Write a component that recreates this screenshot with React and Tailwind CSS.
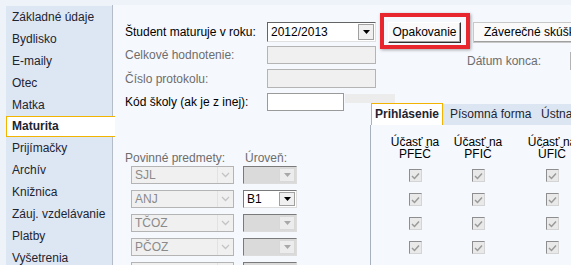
import React from 'react'

const menu = [
  'Základné údaje',
  'Bydlisko',
  'E-maily',
  'Otec',
  'Matka',
  'Maturita',
  'Prijímačky',
  'Archív',
  'Knižnica',
  'Záuj. vzdelávanie',
  'Platby',
  'Vyšetrenia',
]

const subjects = ['SJL', 'ANJ', 'TČOZ', 'PČOZ', '']

function Triangle({ color = '#000' }) {
  return (
    <svg width="7" height="4" viewBox="0 0 7 4">
      <path d="M0 0h7L3.5 4z" fill={color} />
    </svg>
  )
}

function Chevron() {
  return (
    <svg width="9" height="6" viewBox="0 0 9 6">
      <path d="M1 1l3.5 3.5L8 1" fill="none" stroke="#c4c4c4" strokeWidth="1.3" />
    </svg>
  )
}

function CheckBox() {
  return (
    <div className="w-[13px] h-[13px] border border-t-[#8e8e8e] border-l-[#8e8e8e] border-r-[#d4d4d4] border-b-[#d4d4d4] bg-[#e9e9e9] flex items-center justify-center">
      <svg width="9" height="8" viewBox="0 0 9 8">
        <path d="M1 4l2.5 2.5L8 1.5" fill="none" stroke="#9a9a9a" strokeWidth="1.5" />
      </svg>
    </div>
  )
}

function LevelCombo({ value }) {
  const enabled = !!value
  return (
    <div
      className={`ml-[9px] w-[54px] h-[18px] flex border border-t-[#7a7a7a] border-l-[#7a7a7a] border-r-[#dcdcdc] border-b-[#dcdcdc] ${
        enabled ? 'bg-white' : 'bg-[#dadada]'
      }`}
    >
      <div className="flex-1 pl-[3px] text-[12px] leading-[16px] text-black">{value}</div>
      <div
        className={`w-[16px] m-[1px] flex items-center justify-center border ${
          enabled ? 'bg-[#f0f0f0] border-[#a0a0a0]' : 'bg-[#ececec] border-[#d8d8d8]'
        }`}
      >
        <Triangle color={enabled ? '#000' : '#a8a8a8'} />
      </div>
    </div>
  )
}

function Field({ label, gray, children, mt }) {
  return (
    <div className={`flex items-center ${mt}`}>
      <div className={`w-[142px] shrink-0 text-[12px] ${gray ? 'text-[#6d6d6d]' : 'text-black'}`}>{label}</div>
      {children}
    </div>
  )
}

export default function App() {
  return (
    <div className="w-[571px] h-[265px] overflow-hidden bg-[#eef3fa] pt-[5px] pl-[6px] flex font-['Liberation_Sans',Arial,sans-serif] select-none">
      {/* Sidebar */}
      <aside className="w-[106px] shrink-0 mt-[1px] bg-[#dde7f4] flex flex-col">
        {menu.map(name =>
          name === 'Maturita' ? (
            <div key={name} className="h-[22px] relative z-10 -mr-[3px]">
              <div className="h-[21px] bg-white border border-r-0 border-[#f2b400] pl-[5px] text-[12px] leading-[19px] font-bold text-[#1e2430]">
                {name}
              </div>
            </div>
          ) : (
            <div key={name} className="h-[22px] pl-[6px] text-[12px] leading-[22px] text-[#1e2430]">
              {name}
            </div>
          )
        )}
      </aside>

      {/* Main panel */}
      <main className="flex-1 border-l border-[#b4bcc8] bg-[#f5f8fd] flex">
        {/* Left column */}
        <div className="w-[257px] shrink-0 pl-[12px] flex flex-col">
          <Field label="Študent maturuje v roku:" mt="mt-[17px]">
            <div className="w-[109px] h-[20px] shrink-0 bg-white border border-t-[#646464] border-l-[#646464] border-r-[#e0e0e0] border-b-[#e0e0e0] flex">
              <div className="flex-1 pl-[3px] text-[12px] leading-[18px] text-black">2012/2013</div>
              <div className="w-[16px] m-[1px] bg-[#f0f0f0] border border-[#a0a0a0] flex items-center justify-center">
                <Triangle />
              </div>
            </div>
          </Field>
          <Field label="Celkové hodnotenie:" gray mt="mt-[4px]">
            <div className="w-[109px] h-[18px] shrink-0 bg-[#f0f0f0] border border-[#b4b4b4]" />
          </Field>
          <Field label="Číslo protokolu:" gray mt="mt-[5px]">
            <div className="w-[109px] h-[19px] shrink-0 bg-[#f0f0f0] border border-[#b4b4b4]" />
          </Field>
          <div className="flex items-start mt-[5px] h-[18px]">
            <div className="w-[142px] shrink-0 text-[12px] leading-[18px] text-black">Kód školy (ak je z inej):</div>
            <div className="w-[77px] h-[18px] shrink-0 bg-white border border-[#9a9a9a]" />
            <div className="w-[50px] h-[9px] shrink-0 mt-[1px] ml-[1px] bg-[#ececec]" />
          </div>

          <div className="mt-[40px] h-[14px] flex text-[12px] leading-[14px] text-[#6d6d6d]">
            <div className="w-[120px]">Povinné predmety:</div>
            <div>Úroveň:</div>
          </div>
          <div className="mt-[1px] flex flex-col gap-[6px]">
            {subjects.map((s, i) => (
              <div key={i} className="flex h-[18px] ml-[6px]">
                <div className="w-[103px] h-[18px] bg-[#f0f0f0] border border-[#b4b4b4] flex">
                  <div className="flex-1 pl-[3px] text-[12px] leading-[16px] text-[#8a8a8a]">{s}</div>
                  <div className="w-[16px] flex items-center justify-center border-l border-[#e2e2e2]">
                    <Chevron />
                  </div>
                </div>
                <LevelCombo value={s === 'ANJ' ? 'B1' : ''} />
              </div>
            ))}
          </div>
        </div>

        {/* Right column */}
        <div className="flex-1 flex flex-col min-w-0">
          <div className="h-[98px] shrink-0 flex flex-col">
            <div className="flex items-start mt-[8px]">
              <div className="ml-[10px] w-[90px] h-[36px] shrink-0 border-4 border-[#e8262d] shadow-[1px_1px_3px_rgba(0,0,0,0.35)] pt-[5px] pl-[4px]">
                <div className="w-[73px] h-[21px] bg-[#fafafa] border border-t-[#ffffff] border-l-[#ffffff] border-r-[#303030] border-b-[#303030] shadow-[inset_-1px_-1px_0_#a0a0a0] text-[12px] leading-[19px] text-black text-center">
                  Opakovanie
                </div>
              </div>
              <div className="ml-[3px] mt-[9px] w-[130px] h-[21px] shrink-0 bg-[#fafafa] border border-[#c8c8c8] border-r-0 shadow-[inset_0_-1px_0_#a0a0a0] text-[12px] leading-[19px] text-black pl-[10px] whitespace-nowrap">
                Záverečné skúšky
              </div>
            </div>
            <div className="flex items-center mt-[3px] h-[18px]">
              <div className="ml-[97px] w-[103px] shrink-0 text-[12px] text-[#6d6d6d]">Dátum konca:</div>
              <div className="w-[20px] h-[18px] shrink-0 bg-[#f0f0f0] border border-[#b4b4b4]" />
            </div>
          </div>

          {/* Tabs */}
          <div className="h-[22px] shrink-0 flex items-end">
            <div className="w-[1px] h-full" />
            <div className="w-[72px] h-[22px] bg-white border border-b-0 border-[#f2b400] text-[12px] leading-[20px] font-bold text-[#1e2430] text-center relative z-10">
              Prihlásenie
            </div>
            <div className="flex-1 h-[21px] bg-[#dce6f3] flex text-[12px] leading-[21px] text-[#1e2430] whitespace-nowrap">
              <div className="pl-[7px] w-[91px]">Písomná forma</div>
              <div className="pl-[7px]">Ústna</div>
            </div>
          </div>
          <div className="flex-1 border-l border-[#a8b0bc] bg-[#f5f8fd] flex pt-[11px]">
            {['PFEČ', 'PFIČ', 'ÚFIČ'].map((c, i) => (
              <div
                key={c}
                className={`w-[62px] shrink-0 flex flex-col items-center ${
                  i === 0 ? 'ml-[13px]' : i === 1 ? 'ml-[1px]' : 'ml-[12px]'
                }`}
              >
                <div className="text-[12px] leading-[12px] text-black text-center whitespace-nowrap">
                  Účasť na
                  <br />
                  {c}
                </div>
                <div className="mt-[9px] flex flex-col gap-[11px]">
                  <CheckBox />
                  <CheckBox />
                  <CheckBox />
                  <CheckBox />
                </div>
              </div>
            ))}
          </div>
        </div>
      </main>
    </div>
  )
}
